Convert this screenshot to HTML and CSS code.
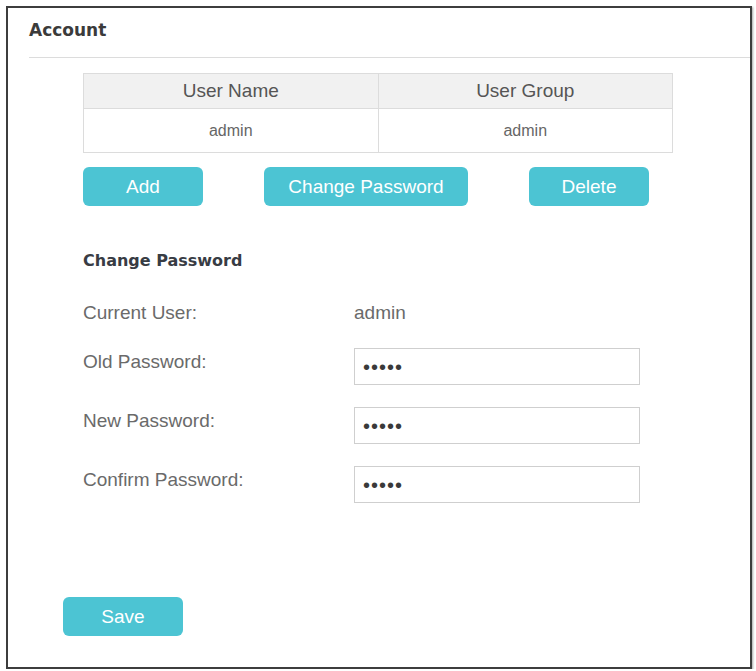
FILE: index.html
```html
<!DOCTYPE html>
<html lang="en">
<head>
    <meta charset="UTF-8">
    <meta name="viewport" content="width=device-width, initial-scale=1.0">
    <title>Account</title>
    <link rel="stylesheet" href="styles.css">
</head>
<body>
    <div class="panel">
        <div class="panel-title">Account</div>

        <table class="user-table">
            <thead>
                <tr>
                    <th>User Name</th>
                    <th>User Group</th>
                </tr>
            </thead>
            <tbody>
                <tr>
                    <td>admin</td>
                    <td>admin</td>
                </tr>
            </tbody>
        </table>

        <div class="actions">
            <button class="btn">Add</button>
            <button class="btn btn-wide">Change Password</button>
            <button class="btn">Delete</button>
        </div>

        <h2 class="section-title">Change Password</h2>

        <form class="pwd-form">
            <div class="row row-info">
                <span class="label">Current User:</span>
                <span class="value">admin</span>
            </div>
            <div class="row">
                <label class="label" for="oldPwd">Old Password:</label>
                <input type="password" id="oldPwd" value="admin">
            </div>
            <div class="row">
                <label class="label" for="newPwd">New Password:</label>
                <input type="password" id="newPwd" value="admin">
            </div>
            <div class="row">
                <label class="label" for="confirmPwd">Confirm Password:</label>
                <input type="password" id="confirmPwd" value="admin">
            </div>
        </form>

        <button class="btn btn-save">Save</button>
    </div>
</body>
</html>
```

FILE: styles.css
```css
body {
    margin: 6px 0 0 6px;
    font-family: "Liberation Sans", Arial, sans-serif;
    background: #fff;
    overflow: hidden;
}
.panel {
    width: 746px;
    height: 663px;
    box-sizing: border-box;
    border: 2px solid #3d3d3d;
    box-shadow: 1px 1px 2px rgba(0, 0, 0, 0.35);
    background: #fff;
}
.panel-title {
    margin-left: 21px;
    padding: 12px 0 17px;
    line-height: 20px;
    font-family: "DejaVu Sans", Verdana, sans-serif;
    font-weight: bold;
    font-size: 17px;
    color: #3b3b3b;
    border-bottom: 1px solid #dcdcdc;
}
.user-table {
    margin: 15px 0 0 75px;
    width: 590px;
    border-collapse: collapse;
    table-layout: fixed;
}
.user-table th,
.user-table td {
    border: 1px solid #dcdcdc;
    text-align: center;
    padding: 0;
}
.user-table th {
    height: 34px;
    background: #f1f1f1;
    font-weight: normal;
    font-size: 19px;
    color: #555;
}
.user-table td {
    height: 43px;
    font-size: 16px;
    color: #666;
}
.actions {
    display: flex;
    gap: 61px;
    margin: 14px 0 0 75px;
}
.btn {
    width: 120px;
    height: 39px;
    border: none;
    border-radius: 6px;
    background: #4cc4d3;
    color: #fff;
    font-family: "Liberation Sans", Arial, sans-serif;
    font-size: 19px;
    cursor: pointer;
}
.btn-wide {
    width: 204px;
}
.section-title {
    margin: 45px 0 0 75px;
    line-height: 20px;
    font-family: "DejaVu Sans", Verdana, sans-serif;
    font-size: 16px;
    font-weight: bold;
    color: #383c44;
}
.pwd-form {
    margin: 31px 0 0 75px;
}
.row {
    display: flex;
    align-items: flex-start;
    margin-bottom: 22px;
}
.row-info {
    margin-bottom: 24px;
}
.label {
    width: 271px;
    padding-top: 3px;
    line-height: 22px;
    font-size: 19px;
    color: #6a6a6a;
}
.row-info .label {
    padding-top: 0;
}
.value {
    line-height: 22px;
    font-size: 19px;
    color: #6a6a6a;
}
.row input {
    width: 286px;
    height: 37px;
    box-sizing: border-box;
    margin: 0;
    padding: 2px 8px 0;
    border: 1.5px solid #cfcfcf;
    font-family: "Liberation Sans", Arial, sans-serif;
    font-size: 20px;
    letter-spacing: 1px;
    color: #3a3a3a;
    outline: none;
}
.btn-save {
    display: block;
    margin: 94px 0 0 55px;
}
```
